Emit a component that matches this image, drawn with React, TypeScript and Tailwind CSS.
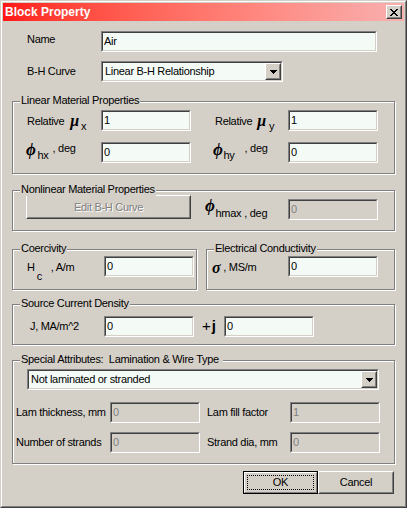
import React from 'react';

const sunkenOuter = 'border border-t-[#808080] border-l-[#808080] border-b-white border-r-white';
const sunkenInner = 'border border-t-[#404040] border-l-[#404040] border-b-[#d4d0c8] border-r-[#d4d0c8]';
const raisedOuter = 'border border-t-white border-l-white border-b-[#404040] border-r-[#404040]';
const raisedInner = 'border border-t-[#d4d0c8] border-l-[#d4d0c8] border-b-[#808080] border-r-[#808080]';
const greek = "font-['Liberation_Serif','DejaVu_Serif',serif] font-bold italic leading-none";

type FieldProps = { value: string; width?: string; disabled?: boolean };

function Field({ value, width = 'w-[90px]', disabled = false }: FieldProps) {
  return (
    <div className={`h-[21px] shrink-0 ${width} ${sunkenOuter}`}>
      <div
        className={`h-full ${sunkenInner} pl-[1px] leading-[17px] ${
          disabled ? 'bg-[#d4d0c8] text-[#808080]' : 'bg-[#f4fbf7]'
        }`}
      >
        {value}
      </div>
    </div>
  );
}

function DropArrow() {
  return (
    <svg width="7" height="4" viewBox="0 0 7 4" shapeRendering="crispEdges">
      <path d="M0 0h7v1H0zM1 1h5v1H1zM2 2h3v1H2zM3 3h1v1H3z" fill="#000" />
    </svg>
  );
}

function Combo({ value, width }: { value: string; width: string }) {
  return (
    <div className={`h-[21px] shrink-0 ${width} ${sunkenOuter}`}>
      <div className={`flex h-full ${sunkenInner} bg-[#f4fbf7]`}>
        <span className="flex-1 pl-[2px] leading-[17px]">{value}</span>
        <div className={`h-full w-[16px] bg-[#d4d0c8] ${raisedOuter}`}>
          <div className={`flex h-full items-center justify-center ${raisedInner}`}>
            <DropArrow />
          </div>
        </div>
      </div>
    </div>
  );
}

function Group({ title, className, children }: { title: string; className: string; children: React.ReactNode }) {
  return (
    <div className={`relative border border-[#808080] shadow-[inset_1px_1px_0_#fff,1px_1px_0_#fff] ${className}`}>
      <span className="absolute left-[7px] top-[-8px] whitespace-pre bg-[#d4d0c8] px-[1px] leading-[13px]">{title}</span>
      {children}
    </div>
  );
}

function CloseGlyph() {
  return (
    <svg width="8" height="7" viewBox="0 0 8 7" shapeRendering="crispEdges">
      <path
        d="M0 0h2v1H0zM6 0h2v1H6zM1 1h2v1H1zM5 1h2v1H5zM2 2h4v1H2zM3 3h2v1H3zM2 4h4v1H2zM1 5h2v1H1zM5 5h2v1H5zM0 6h2v1H0zM6 6h2v1H6z"
        fill="#000"
      />
    </svg>
  );
}

export default function App() {
  return (
    <div className="h-[508px] w-[407px] font-['Liberation_Sans',Arial,sans-serif] text-[11px] tracking-[-0.3px] text-black">
      <div className="h-full border border-t-[#d4d0c8] border-l-[#d4d0c8] border-b-[#404040] border-r-[#404040]">
        <div className="h-full border border-t-white border-l-white border-b-[#808080] border-r-[#808080] bg-[#d4d0c8] p-[1px]">
          {/* title bar */}
          <div className="flex h-[18px] items-center justify-between bg-linear-to-r from-[#ff1414] to-[#f8b0b0] pl-[2px] pr-[2px]">
            <span className="text-[12px] font-bold tracking-normal text-white">Block Property</span>
            <div className={`h-[14px] w-[16px] bg-[#d4d0c8] ${raisedOuter}`}>
              <div className={`flex h-full items-center justify-center ${raisedInner}`}>
                <CloseGlyph />
              </div>
            </div>
          </div>

          <div className="flex flex-col px-[9px]">
            <div className="mt-[10px] flex h-[21px] items-center">
              <span className="w-[89px] shrink-0 -translate-y-[2px] pl-[15px]">Name</span>
              <Field value="Air" width="w-[276px]" />
            </div>
            <div className="mt-[9px] flex h-[21px] items-center">
              <span className="w-[89px] shrink-0 pl-[15px]">B-H Curve</span>
              <Combo value="Linear B-H Relationship" width="w-[182px]" />
            </div>

            <Group title="Linear Material Properties" className="mt-[19px] h-[73px] pt-[8px]">
              <div className="flex h-[21px] items-center pl-[14px]">
                <div className="flex w-[74px] shrink-0 items-center">
                  <span className="translate-y-[1px]">Relative</span>
                  <span className={`${greek} ml-[6px] text-[16px]`}>μ</span>
                  <span className="ml-[2px] translate-y-[6px]">x</span>
                </div>
                <Field value="1" />
                <div className="flex w-[97px] shrink-0 items-center pl-[24px]">
                  <span className="translate-y-[1px]">Relative</span>
                  <span className={`${greek} ml-[5px] text-[16px]`}>μ</span>
                  <span className="ml-[3px] translate-y-[6px]">y</span>
                </div>
                <Field value="1" />
              </div>
              <div className="mt-[11px] flex h-[21px] items-center pl-[13px]">
                <div className="flex w-[75px] shrink-0 items-center">
                  <span className={`${greek} -translate-y-[3px] text-[17px]`}>ϕ</span>
                  <span className="ml-[2px] translate-y-[3px]">hx</span>
                  <span className="ml-[4px] -translate-y-[4px]">, deg</span>
                </div>
                <Field value="0" />
                <div className="flex w-[97px] shrink-0 items-center pl-[22px]">
                  <span className={`${greek} -translate-y-[3px] text-[17px]`}>ϕ</span>
                  <span className="ml-[1px] translate-y-[3px]">hy</span>
                  <span className="ml-[10px] -translate-y-[4px]">, deg</span>
                </div>
                <Field value="0" />
              </div>
            </Group>

            <Group title="Nonlinear Material Properties" className="mt-[16px] h-[41px]">
              <div className="flex items-start pl-[13px] pt-[4px]">
                <div className={`h-[24px] w-[165px] shrink-0 ${raisedOuter}`}>
                  <div
                    className={`flex h-full items-center justify-center ${raisedInner} text-[#808080] [text-shadow:1px_1px_0_#fff]`}
                  >
                    Edit B-H Curve
                  </div>
                </div>
                <div className="ml-[14px] flex h-[24px] w-[83px] shrink-0 items-center">
                  <span className={`${greek} -translate-y-[2px] text-[17px]`}>ϕ</span>
                  <span className="ml-[1px] translate-y-[6px]">hmax</span>
                  <span className="ml-[3px] translate-y-[6px]">, deg</span>
                </div>
                <div className="mt-[4px]">
                  <Field value="0" disabled />
                </div>
              </div>
            </Group>

            <div className="mt-[18px] flex gap-[9px]">
              <Group title="Coercivity" className="h-[41px] w-[185px] shrink-0 pt-[6px]">
                <div className="flex h-[21px] items-center pl-[14px]">
                  <div className="flex w-[77px] shrink-0 items-center">
                    <span className="translate-y-[1px]">H</span>
                    <span className="ml-[2px] translate-y-[10px]">c</span>
                    <span className="ml-[9px] translate-y-[1px]">, A/m</span>
                  </div>
                  <Field value="0" />
                </div>
              </Group>
              <Group title="Electrical Conductivity" className="h-[41px] w-[189px] shrink-0 pt-[6px]">
                <div className="flex h-[21px] items-center pl-[5px]">
                  <div className="flex w-[76px] shrink-0 items-center">
                    <span className={`${greek} translate-y-[1px] text-[16px]`}>σ</span>
                    <span className="ml-[3px] translate-y-[1px]">, MS/m</span>
                  </div>
                  <Field value="0" />
                </div>
              </Group>
            </div>

            <Group title="Source Current Density" className="mt-[14px] h-[41px] pt-[11px]">
              <div className="flex h-[21px] items-center pl-[17px]">
                <span className="w-[74px] shrink-0">J, MA/m^2</span>
                <Field value="0" />
                <div className="flex w-[30px] shrink-0 items-center pl-[8px] text-[15px] tracking-normal">
                  <span>+</span>
                  <span className="ml-[1px] font-bold">j</span>
                </div>
                <Field value="0" />
              </div>
            </Group>

            <Group title="Special Attributes:  Lamination & Wire Type " className="mt-[15px] h-[104px] pt-[8px]">
              <div className="pl-[14px]">
                <Combo value="Not laminated or stranded" width="w-[352px]" />
              </div>
              <div className="mt-[12px] flex h-[21px] items-center pl-[3px]">
                <span className="w-[94px] shrink-0 whitespace-nowrap">Lam thickness, mm</span>
                <Field value="0" disabled />
                <span className="w-[90px] shrink-0 whitespace-nowrap pl-[7px]">Lam fill factor</span>
                <Field value="1" disabled />
              </div>
              <div className="mt-[9px] flex h-[21px] items-center pl-[3px]">
                <span className="w-[94px] shrink-0 whitespace-nowrap">Number of strands</span>
                <Field value="0" disabled />
                <span className="w-[90px] shrink-0 whitespace-nowrap pl-[7px]">Strand dia, mm</span>
                <Field value="0" disabled />
              </div>
            </Group>

            <div className="mt-[7px] flex justify-end pr-[1px]">
              <div className="h-[23px] w-[75px] border border-black">
                <div className="h-full border border-t-white border-l-white border-b-[#808080] border-r-[#808080] p-[2px]">
                  <div className="flex h-full items-center justify-center border border-dotted border-black">OK</div>
                </div>
              </div>
              <div className={`h-[23px] w-[76px] ${raisedOuter}`}>
                <div className={`flex h-full items-center justify-center ${raisedInner}`}>Cancel</div>
              </div>
            </div>
          </div>
        </div>
      </div>
    </div>
  );
}
